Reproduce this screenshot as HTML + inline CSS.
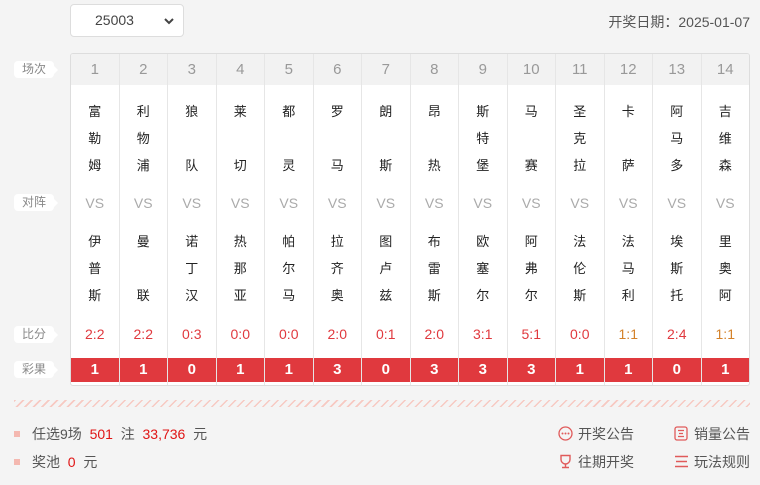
<!DOCTYPE html>
<html><head><meta charset="utf-8"><style>
*{margin:0;padding:0;box-sizing:border-box}
body{width:760px;height:485px;background:#f4f4f4;font-family:"Liberation Sans","Noto Sans CJK SC",sans-serif;position:relative;overflow:hidden;color:#333}
.sel{position:absolute;left:70px;top:4px;width:114px;height:33px;background:#fff;border:1px solid #ddd;border-radius:4px;font-size:14px;color:#444;line-height:31px;padding-left:24px}
.sel svg{position:absolute;right:9px;top:12px}
.date{position:absolute;right:10px;top:12px;font-size:14px;color:#555}
.lab{position:absolute;left:14px;width:40px;height:17px;background:#fff;border-radius:4px;font-size:12px;color:#888;text-align:center;line-height:17px}
.lab:after{content:"";position:absolute;right:-4px;top:5px;border-left:4px solid #fff;border-top:4px solid transparent;border-bottom:4px solid transparent}
.tbl{position:absolute;left:70px;top:53px;width:680px;height:333px;background:#fff;border:1px solid #ddd;border-radius:3px;display:flex;overflow:hidden}
.col{flex:1;border-right:1px solid #e6e6e6;position:relative;text-align:center}
.col:last-child{border-right:none}
.num{height:31px;background:#f2f2f2;line-height:31px;font-size:15px;color:#999}
.team{position:absolute;left:0;right:0;height:64px;display:flex;flex-direction:column;justify-content:space-between;font-size:13px;color:#222;line-height:10px}
.home{top:53px}.away{top:183px}
.vs{position:absolute;top:141px;left:0;right:0;font-size:14px;color:#aaa}
.sc{position:absolute;top:272px;left:0;right:0;font-size:14px;color:#e0393e}
.res{position:absolute;top:304px;left:0;right:0;height:24px;background:#e0393e;color:#fff;font-weight:bold;font-size:15px;line-height:24px}
.hatch{position:absolute;left:14px;top:400px;width:736px;height:7px;background:repeating-linear-gradient(135deg,#f7c9c2 0 1.5px,transparent 1.5px 6px)}
.info{position:absolute;left:14px;font-size:14px;color:#555}
.info i{display:inline-block;width:6px;height:6px;background:#f4b8b0;margin-right:12px;vertical-align:2px}
.r{color:#e01515}
.lk{position:absolute;font-size:14px;color:#555}
.lk svg{position:absolute;left:-20px;top:2px}
</style></head><body>
<div class="sel">25003<svg width="10" height="8" viewBox="0 0 10 8"><path d="M1 2l4 4 4-4" stroke="#444" stroke-width="2" fill="none"/></svg></div>
<div class="date">开奖日期：2025-01-07</div>
<div class="lab" style="top:61px">场次</div>
<div class="lab" style="top:194px">对阵</div>
<div class="lab" style="top:326px">比分</div>
<div class="lab" style="top:361px">彩果</div>
<div class="tbl">
<div class="col"><div class="num">1</div><div class="team home"><span>富</span><span>勒</span><span>姆</span></div><div class="vs">VS</div><div class="team away"><span>伊</span><span>普</span><span>斯</span></div><div class="sc">2:2</div><div class="res">1</div></div>
<div class="col"><div class="num">2</div><div class="team home"><span>利</span><span>物</span><span>浦</span></div><div class="vs">VS</div><div class="team away"><span>曼</span><span>联</span></div><div class="sc">2:2</div><div class="res">1</div></div>
<div class="col"><div class="num">3</div><div class="team home"><span>狼</span><span>队</span></div><div class="vs">VS</div><div class="team away"><span>诺</span><span>丁</span><span>汉</span></div><div class="sc">0:3</div><div class="res">0</div></div>
<div class="col"><div class="num">4</div><div class="team home"><span>莱</span><span>切</span></div><div class="vs">VS</div><div class="team away"><span>热</span><span>那</span><span>亚</span></div><div class="sc">0:0</div><div class="res">1</div></div>
<div class="col"><div class="num">5</div><div class="team home"><span>都</span><span>灵</span></div><div class="vs">VS</div><div class="team away"><span>帕</span><span>尔</span><span>马</span></div><div class="sc">0:0</div><div class="res">1</div></div>
<div class="col"><div class="num">6</div><div class="team home"><span>罗</span><span>马</span></div><div class="vs">VS</div><div class="team away"><span>拉</span><span>齐</span><span>奥</span></div><div class="sc">2:0</div><div class="res">3</div></div>
<div class="col"><div class="num">7</div><div class="team home"><span>朗</span><span>斯</span></div><div class="vs">VS</div><div class="team away"><span>图</span><span>卢</span><span>兹</span></div><div class="sc">0:1</div><div class="res">0</div></div>
<div class="col"><div class="num">8</div><div class="team home"><span>昂</span><span>热</span></div><div class="vs">VS</div><div class="team away"><span>布</span><span>雷</span><span>斯</span></div><div class="sc">2:0</div><div class="res">3</div></div>
<div class="col"><div class="num">9</div><div class="team home"><span>斯</span><span>特</span><span>堡</span></div><div class="vs">VS</div><div class="team away"><span>欧</span><span>塞</span><span>尔</span></div><div class="sc">3:1</div><div class="res">3</div></div>
<div class="col"><div class="num">10</div><div class="team home"><span>马</span><span>赛</span></div><div class="vs">VS</div><div class="team away"><span>阿</span><span>弗</span><span>尔</span></div><div class="sc">5:1</div><div class="res">3</div></div>
<div class="col"><div class="num">11</div><div class="team home"><span>圣</span><span>克</span><span>拉</span></div><div class="vs">VS</div><div class="team away"><span>法</span><span>伦</span><span>斯</span></div><div class="sc">0:0</div><div class="res">1</div></div>
<div class="col"><div class="num">12</div><div class="team home"><span>卡</span><span>萨</span></div><div class="vs">VS</div><div class="team away"><span>法</span><span>马</span><span>利</span></div><div class="sc" style="color:#d4822a">1:1</div><div class="res">1</div></div>
<div class="col"><div class="num">13</div><div class="team home"><span>阿</span><span>马</span><span>多</span></div><div class="vs">VS</div><div class="team away"><span>埃</span><span>斯</span><span>托</span></div><div class="sc">2:4</div><div class="res">0</div></div>
<div class="col"><div class="num">14</div><div class="team home"><span>吉</span><span>维</span><span>森</span></div><div class="vs">VS</div><div class="team away"><span>里</span><span>奥</span><span>阿</span></div><div class="sc" style="color:#d4822a">1:1</div><div class="res">1</div></div>
</div>
<div class="hatch"></div>
<div class="info" style="top:424px"><i></i>任选9场&nbsp; <span class="r">501</span>&nbsp; 注&nbsp; <span class="r">33,736</span>&nbsp; 元</div>
<div class="info" style="top:452px"><i></i>奖池&nbsp; <span class="r">0</span>&nbsp; 元</div>
<div class="lk" style="left:578px;top:424px"><svg width="15" height="15" viewBox="0 0 15 15"><circle cx="7.5" cy="7.5" r="6.5" stroke="#e05a5a" stroke-width="1.3" fill="none"/><circle cx="4.5" cy="7.5" r="1" fill="#e05a5a"/><circle cx="7.5" cy="7.5" r="1" fill="#e05a5a"/><circle cx="10.5" cy="7.5" r="1" fill="#e05a5a"/></svg>开奖公告</div>
<div class="lk" style="left:694px;top:424px"><svg width="14" height="15" viewBox="0 0 14 15"><rect x="1" y="1" width="12" height="13" rx="2" stroke="#e05a5a" stroke-width="1.3" fill="none"/><path d="M4 4.5h6M5 7.5h4M4 10.5h6" stroke="#e05a5a" stroke-width="1.2"/></svg>销量公告</div>
<div class="lk" style="left:578px;top:452px"><svg width="15" height="15" viewBox="0 0 15 15"><path d="M3 1.5h9v4a4.5 4.5 0 0 1-9 0z" stroke="#e05a5a" stroke-width="1.4" fill="none"/><path d="M7.5 10v3M4 13.5h7" stroke="#e05a5a" stroke-width="1.4"/></svg>往期开奖</div>
<div class="lk" style="left:694px;top:452px"><svg width="15" height="15" viewBox="0 0 15 15"><path d="M1 2.5h13M2 7.5h11M1 12.5h13" stroke="#e05a5a" stroke-width="1.5"/></svg>玩法规则</div>
</body></html>
